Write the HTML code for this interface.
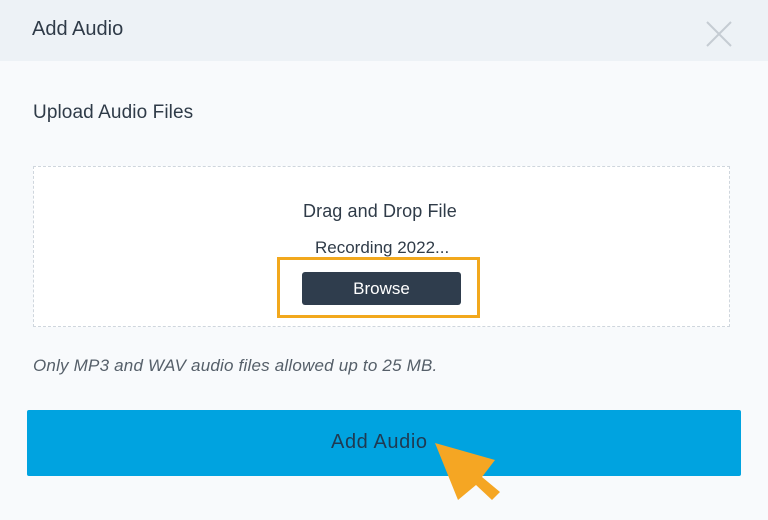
<!DOCTYPE html>
<html><head><meta charset="utf-8"><style>
html,body{margin:0;padding:0;width:768px;height:520px;overflow:hidden;background:#f8fafc;font-family:"Liberation Sans",sans-serif;color:#2f3b48;position:relative}
.hdr{position:absolute;left:0;top:0;width:768px;height:61px;background:#edf2f6}
.t{position:absolute;white-space:nowrap}
.drop{position:absolute;left:33px;top:166px;width:695px;height:159px;background:#fff;border:1px dashed #cfd6dd}
.browse{position:absolute;left:302px;top:272px;width:159px;height:33px;background:#2f3d4d;border-radius:3px;color:#fff;font-size:17px;text-align:center;line-height:33px}
.hl{position:absolute;left:277px;top:257px;width:203px;height:61px;border:3px solid #f2a81d;box-sizing:border-box}
.btn{position:absolute;left:27px;top:410px;width:714px;height:66px;background:#00a3e0;border-radius:2px}
</style></head><body>
<div class="hdr"></div>
<div class="t" style="left:32px;top:18px;font-size:20px;letter-spacing:0px">Add Audio</div>
<svg style="position:absolute;left:706px;top:21px" width="26" height="26"><path d="M1 1L25 25M25 1L1 25" stroke="#c5ccd3" stroke-width="2" fill="none"/></svg>
<div class="t" style="left:33px;top:102px;font-size:19px;letter-spacing:0.1px">Upload Audio Files</div>
<div class="drop"></div>
<div class="t" style="left:303px;top:201px;font-size:18px;letter-spacing:0.1px">Drag and Drop File</div>
<div class="t" style="left:315px;top:238px;font-size:17px">Recording 2022...</div>
<div class="browse">Browse</div>
<div class="hl"></div>
<div class="t" style="left:33px;top:356px;font-size:17px;font-style:italic;color:#555f69;letter-spacing:0.2px">Only MP3 and WAV audio files allowed up to 25 MB.</div>
<div class="btn"></div>
<div class="t" style="left:331px;top:431px;font-size:20px;color:#1f3a52;letter-spacing:0.6px">Add Audio</div>
<svg style="position:absolute;left:0;top:0" width="768" height="520"><polygon points="435,443 495,460 482,477 500,492 492,500 476,485 458,500" fill="#f5a623"/></svg>
</body></html>
